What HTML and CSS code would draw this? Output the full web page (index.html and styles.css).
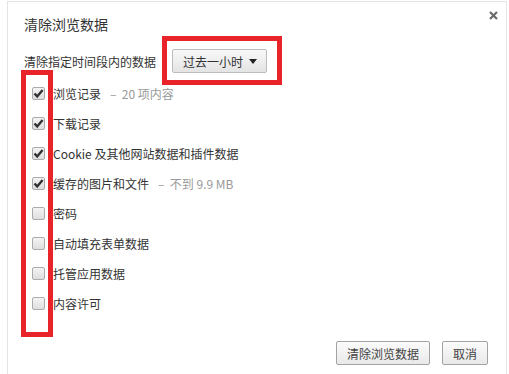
FILE: index.html
```html
<!DOCTYPE html>
<html lang="zh-CN">
<head>
    <meta charset="UTF-8">
    <title>清除浏览数据</title>
    <link rel="stylesheet" href="styles.css">
</head>
<body>
    <div class="dialog">
        <div class="header">
            <div class="title">清除浏览数据</div>
        </div>
        <button class="close" aria-label="关闭">
            <svg width="9" height="9" viewBox="0 0 9 9"><path d="M1 1 L8 8 M8 1 L1 8" stroke="#6a6a6a" stroke-width="2.2" /></svg>
        </button>

        <div class="time-row">
            <span>清除指定时间段内的数据</span>
            <button class="select">
                <span>过去一小时</span>
                <svg width="8" height="5" viewBox="0 0 8 5"><path d="M0 0 H8 L4 5 Z" fill="#222" /></svg>
            </button>
        </div>

        <ul class="options">
            <li><span class="box checked"></span>浏览记录<span class="note">–&nbsp; 20 项内容</span></li>
            <li><span class="box checked"></span>下载记录</li>
            <li><span class="box checked"></span>Cookie 及其他网站数据和插件数据</li>
            <li><span class="box checked"></span>缓存的图片和文件<span class="note">–&nbsp; 不到 9.9 MB</span></li>
            <li><span class="box"></span>密码</li>
            <li><span class="box"></span>自动填充表单数据</li>
            <li><span class="box"></span>托管应用数据</li>
            <li><span class="box"></span>内容许可</li>
        </ul>

        <div class="footer">
            <button class="btn">清除浏览数据</button>
            <button class="btn">取消</button>
        </div>
    </div>

    <!-- annotation boxes drawn over the screenshot -->
    <div class="mark mark-select"></div>
    <div class="mark mark-boxes"></div>
</body>
</html>
```

FILE: styles.css
```css
* {
    box-sizing: border-box;
}

body {
    margin: 0;
    font-family: "Noto Sans CJK SC", "Noto Sans", sans-serif;
    font-size: 12px;
    color: #333;
    background: #fff;
}

.dialog {
    position: relative;
    margin: 1px 2px 0 7px;
    height: 373px;
    border: 1px solid #e4e4e4;
    border-bottom: none;
    padding: 0 18px 0 16px;
}

.header {
    padding-top: 12px;
}

.title {
    font-size: 14px;
    line-height: 20px;
    color: #333;
}

.close {
    position: absolute;
    top: 9px;
    right: 8px;
    border: none;
    background: none;
    padding: 0;
    width: 9px;
    height: 9px;
    display: flex;
}

.time-row {
    display: flex;
    align-items: center;
    gap: 16px;
    margin-top: 15px;
    height: 24px;
}

.select {
    display: flex;
    align-items: center;
    justify-content: space-between;
    width: 95px;
    height: 24px;
    padding: 0 9px 0 10px;
    border: 1px solid #bcbcbc;
    border-radius: 2px;
    background: linear-gradient(#f8f8f8, #e4e4e4);
    font-family: inherit;
    font-size: 12px;
    color: #333;
}

.options {
    list-style: none;
    margin: 5px 0 0;
    padding: 0;
}

.options li {
    display: flex;
    align-items: center;
    height: 30px;
    padding-left: 8px;
}

.box {
    width: 13px;
    height: 13px;
    margin-right: 8px;
    border: 1px solid #ababab;
    border-radius: 2px;
    background: linear-gradient(#f4f4f4, #dedede);
    flex: none;
}

.box.checked {
    background: url("data:image/svg+xml,%3Csvg xmlns='http://www.w3.org/2000/svg' width='11' height='11' viewBox='0 0 11 11'%3E%3Cpath d='M1.5 5.5 L4.2 8.4 L9.6 2' fill='none' stroke='%23333' stroke-width='2.4'/%3E%3C/svg%3E") center no-repeat, linear-gradient(#f4f4f4, #dedede);
}

.note {
    margin-left: 9px;
    color: #999;
}

.footer {
    display: flex;
    justify-content: flex-end;
    gap: 12px;
    margin-top: 23px;
}

.btn {
    height: 24px;
    padding: 0 10px;
    border: 1px solid #a3a3a3;
    border-radius: 2px;
    background: linear-gradient(#fbfbfb, #e9e9e9);
    font-family: inherit;
    font-size: 12px;
    color: #444;
}

.mark {
    position: absolute;
    border: 5px solid #e8232a;
}

.mark-select {
    left: 162px;
    top: 36px;
    width: 120px;
    height: 49px;
}

.mark-boxes {
    left: 21px;
    top: 70px;
    width: 32px;
    height: 267px;
}
```
